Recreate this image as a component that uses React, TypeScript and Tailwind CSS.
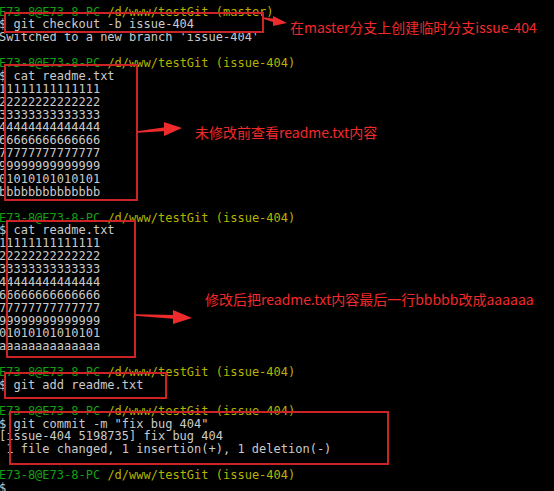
const mono = { fontFamily: '"DejaVu Sans Mono", "Liberation Mono", monospace' };

type Line =
  | { kind: "prompt"; branch: string }
  | { kind: "text"; text: string };

const prompt = (branch: string): Line => ({ kind: "prompt", branch });
const t = (text: string): Line => ({ kind: "text", text });

const fileBefore = [
  "11111111111111",
  "22222222222222",
  "33333333333333",
  "44444444444444",
  "66666666666666",
  "77777777777777",
  "99999999999999",
  "01010101010101",
  "bbbbbbbbbbbbbb",
];

const fileAfter = [...fileBefore.slice(0, 8), "aaaaaaaaaaaaaa"];

const lines: Line[] = [
  prompt("master"),
  t("$ git checkout -b issue-404"),
  t("Switched to a new branch 'issue-404'"),
  t(""),
  prompt("issue-404"),
  t("$ cat readme.txt"),
  ...fileBefore.map(t),
  t(""),
  prompt("issue-404"),
  t("$ cat readme.txt"),
  ...fileAfter.map(t),
  t(""),
  prompt("issue-404"),
  t("$ git add readme.txt"),
  t(""),
  prompt("issue-404"),
  t('$ git commit -m "fix bug 404"'),
  t("[issue-404 5198735] fix bug 404"),
  t(" 1 file changed, 1 insertion(+), 1 deletion(-)"),
  t(""),
  prompt("issue-404"),
  t("$"),
];

// red highlight boxes drawn over the terminal
const boxes = [
  { left: 4, top: 12, width: 260, height: 21 },
  { left: 4, top: 64, width: 134, height: 137 },
  { left: 6, top: 220, width: 130, height: 138 },
  { left: 4, top: 372, width: 163, height: 27 },
  { left: 9, top: 411, width: 380, height: 54 },
];

// shaft start, head base, tip, head half-height
const arrows = [
  { x1: 263, y1: 18, bx: 276, by: 21, tx: 287, ty: 23, h: 5 },
  { x1: 137, y1: 132, bx: 167, by: 129, tx: 182, ty: 128, h: 7 },
  { x1: 135, y1: 315, bx: 176, by: 317, tx: 192, ty: 318, h: 7 },
];

const notes = [
  { left: 290, top: 17, text: "在master分支上创建临时分支issue-404" },
  { left: 195, top: 122, text: "未修改前查看readme.txt内容" },
  { left: 205, top: 289, text: "修改后把readme.txt内容最后一行bbbbb改成aaaaaa" },
];

function Arrow({ x1, y1, bx, by, tx, ty, h }: (typeof arrows)[number]) {
  return (
    <g fill="#ee2b2b">
      <polygon points={`${x1},${y1 - 0.8} ${bx},${by - 2} ${bx},${by + 2} ${x1},${y1 + 0.8}`} />
      <polygon points={`${bx - 3},${by - h} ${tx},${ty} ${bx - 3},${by + h}`} />
    </g>
  );
}

export default function App() {
  return (
    <div className="relative w-[554px] h-[491px] overflow-hidden bg-black">
      <div
        className="pt-[5.5px] -ml-[1px] text-[12px] leading-[12.875px] text-[#cacaca] whitespace-pre"
        style={mono}
      >
        {lines.map((line, i) =>
          line.kind === "prompt" ? (
            <div key={i} className="h-[12.875px]">
              <span className="text-[#12a012]">E73-8@E73-8-PC</span>{" "}
              <span className="text-[#b4b400]">/d/www/testGit ({line.branch})</span>
            </div>
          ) : (
            <div key={i} className="h-[12.875px]">
              {line.text}
            </div>
          )
        )}
      </div>

      {boxes.map((b, i) => (
        <div
          key={i}
          className="absolute border-2 border-[#cc2424]"
          style={{ left: b.left, top: b.top, width: b.width, height: b.height }}
        />
      ))}

      <svg className="absolute left-0 top-0" width={554} height={491}>
        {arrows.map((a, i) => (
          <Arrow key={i} {...a} />
        ))}
      </svg>

      {notes.map((n, i) => (
        <div
          key={i}
          className="absolute whitespace-nowrap text-[14px] leading-[20px] text-[#f02a2a]"
          style={{
            left: n.left,
            top: n.top,
            fontFamily: '"Noto Sans CJK SC", "Noto Sans", sans-serif',
          }}
        >
          {n.text}
        </div>
      ))}
    </div>
  );
}
